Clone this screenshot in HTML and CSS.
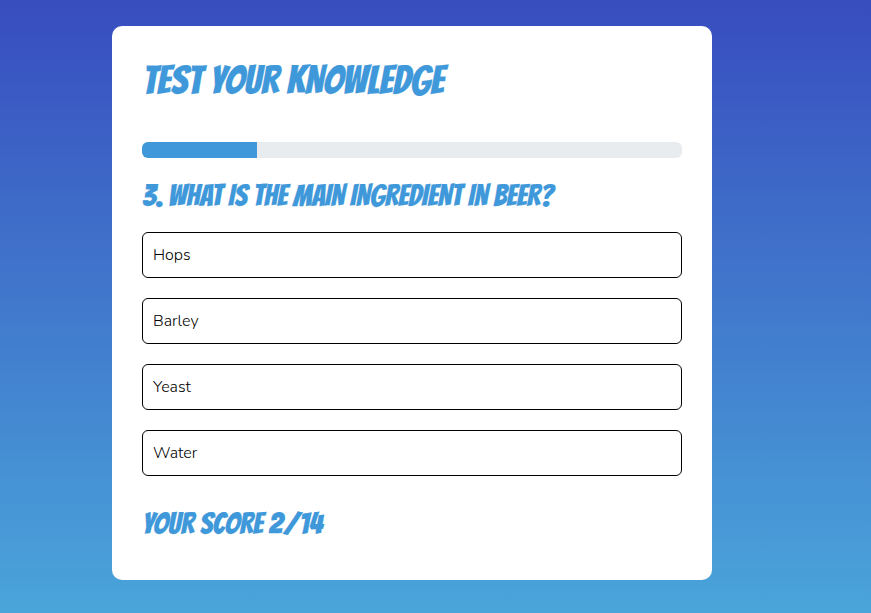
FILE: index.html
```html
<!DOCTYPE html>
<html lang="en">
<head>
<meta charset="utf-8">
<title>Test your knowledge</title>
<link rel="stylesheet" href="styles.css">
</head>
<body>
<main class="quiz">
  <h1 class="title">TEST YOUR KNOWLEDGE</h1>
  <div class="progress"><div class="progress-bar" style="width:115px"></div></div>
  <h2 class="question">3. WHAT IS THE MAIN INGREDIENT IN BEER?</h2>
  <ul class="answers">
    <li class="answer">Hops</li>
    <li class="answer">Barley</li>
    <li class="answer">Yeast</li>
    <li class="answer">Water</li>
  </ul>
  <p class="score">YOUR SCORE 2/14</p>
</main>
</body>
</html>
```

FILE: styles.css
```css
* { box-sizing: border-box; }
body {
  margin: 0;
  height: 613px;
  overflow: hidden;
  background: linear-gradient(#384dbf, #4aa5da);
  font-family: Nunito, "Open Sans", sans-serif;
  font-weight: 330;
}
.quiz {
  width: 600px;
  height: 554px;
  margin: 26px 0 0 112px;
  padding: 30px;
  background: #fff;
  border-radius: 10px;
}
.title, .question, .score {
  margin: 0;
  padding-left: 0.4px;
  color: #3e98d9;
  font-family: Bangers, "Open Sans", sans-serif;
  font-weight: 400;
  white-space: nowrap;
  -webkit-text-stroke: 0.25px #3e98d9;
}
.title { height: 86px; font-size: 40px; line-height: 48px; }
.progress { height: 16px; border-radius: 6px; background: #e9ecef; overflow: hidden; }
.progress-bar { height: 100%; background: #3e98d9; }
.question { height: 74px; padding-top: 20px; font-size: 30px; line-height: 36px; }
.answers { display: grid; gap: 20px; margin: 0; padding: 0; list-style: none; }
.answer { height: 46px; padding: 0 10px; border: 1px solid #000; border-radius: 6px; color: #000; font-size: 16px; line-height: 44px; }
.score { padding-top: 30px; font-size: 30px; line-height: 36px; }
```
